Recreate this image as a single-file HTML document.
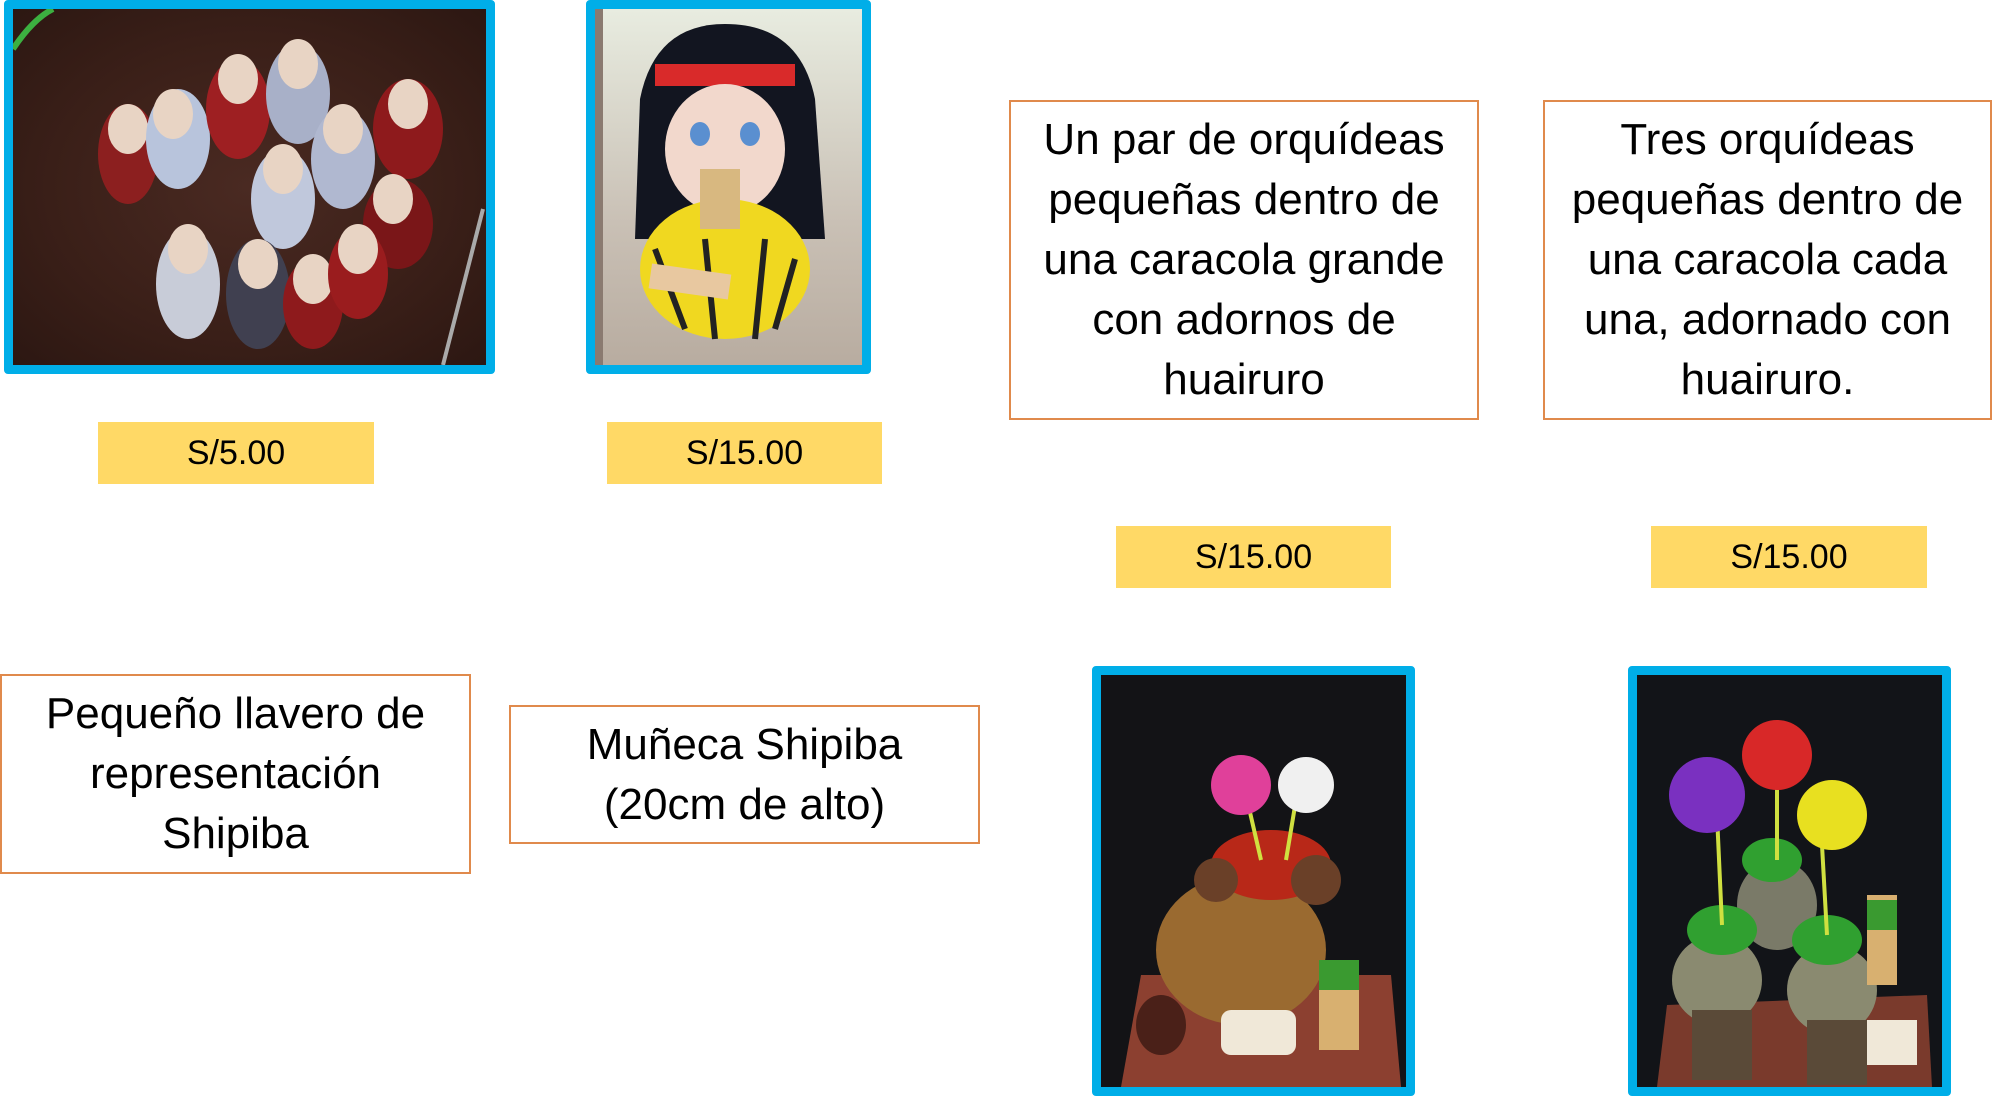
<!DOCTYPE html>
<html><head><meta charset="utf-8"><style>
*{margin:0;padding:0;box-sizing:border-box}
body{width:2000px;height:1081px;background:#fff;position:relative;overflow:hidden;font-family:"Liberation Sans",sans-serif;color:#000}
.a{position:absolute}
.frame{position:absolute;border:9px solid #00aee8;border-radius:4px;overflow:hidden}
.price{position:absolute;background:#ffd966;font-size:34px;display:flex;align-items:center;justify-content:center}
.box{position:absolute;border:2px solid #e08a4c;font-size:44px;line-height:60px;text-align:center;display:flex;align-items:center;justify-content:center;white-space:nowrap}
</style></head><body>

<div class="frame" style="left:4px;top:0;width:491px;height:374px;background:radial-gradient(ellipse at 50% 50%,#4a2a22 0%,#3a1f18 60%,#2c1712 100%)">
<svg width="473" height="356" viewBox="0 0 473 356">
<path d="M0 40 Q20 10 40 0" stroke="#3cb040" stroke-width="6" fill="none"/>
<g>
<ellipse cx="115" cy="145" rx="30" ry="50" fill="#8c1f1f"/><ellipse cx="115" cy="120" rx="20" ry="25" fill="#e8d4c4"/>
<ellipse cx="165" cy="130" rx="32" ry="50" fill="#b8c4dc"/><ellipse cx="160" cy="105" rx="20" ry="25" fill="#e8d4c4"/>
<ellipse cx="225" cy="100" rx="32" ry="50" fill="#9e1f22"/><ellipse cx="225" cy="70" rx="20" ry="25" fill="#e8d4c4"/>
<ellipse cx="285" cy="85" rx="32" ry="50" fill="#a8b0c8"/><ellipse cx="285" cy="55" rx="20" ry="25" fill="#e8d4c4"/>
<ellipse cx="330" cy="150" rx="32" ry="50" fill="#b0b8d0"/><ellipse cx="330" cy="120" rx="20" ry="25" fill="#e8d4c4"/>
<ellipse cx="395" cy="120" rx="35" ry="50" fill="#8e1a1c"/><ellipse cx="395" cy="95" rx="20" ry="25" fill="#e8d4c4"/>
<ellipse cx="270" cy="190" rx="32" ry="50" fill="#c0c8dc"/><ellipse cx="270" cy="160" rx="20" ry="25" fill="#e8d4c4"/>
<ellipse cx="385" cy="215" rx="35" ry="45" fill="#7a1618"/><ellipse cx="380" cy="190" rx="20" ry="25" fill="#e8d4c4"/>
<ellipse cx="175" cy="275" rx="32" ry="55" fill="#c8ccd8"/><ellipse cx="175" cy="240" rx="20" ry="25" fill="#e8d4c4"/>
<ellipse cx="245" cy="285" rx="32" ry="55" fill="#404050"/><ellipse cx="245" cy="255" rx="20" ry="25" fill="#e8d4c4"/>
<ellipse cx="300" cy="295" rx="30" ry="45" fill="#8e1a1c"/><ellipse cx="300" cy="270" rx="20" ry="25" fill="#e8d4c4"/>
<ellipse cx="345" cy="265" rx="30" ry="45" fill="#9a1c1e"/><ellipse cx="345" cy="240" rx="20" ry="25" fill="#e8d4c4"/>
</g>
<path d="M470 200 L430 356" stroke="#aaa" stroke-width="4"/>
</svg></div>

<div class="frame" style="left:586px;top:0;width:285px;height:374px;background:linear-gradient(#e8ece0,#c9c0b5 60%,#b8aca0)">
<svg width="267" height="356" viewBox="0 0 267 356">
<rect x="0" y="0" width="8" height="356" fill="#8a7a70"/>
<path d="M45 90 Q60 15 130 15 Q205 15 220 90 L230 230 L40 230 Z" fill="#121520"/>
<rect x="60" y="55" width="140" height="22" fill="#d92a2a"/>
<ellipse cx="130" cy="140" rx="60" ry="65" fill="#f2d8cc"/>
<ellipse cx="105" cy="125" rx="10" ry="12" fill="#5a8fd0"/><ellipse cx="155" cy="125" rx="10" ry="12" fill="#5a8fd0"/>
<ellipse cx="130" cy="260" rx="85" ry="70" fill="#f0d820"/>
<path d="M60 240 L90 320 M110 230 L120 330 M170 230 L160 330 M200 250 L180 320" stroke="#222" stroke-width="6"/>
<rect x="105" y="160" width="40" height="60" fill="#d8b880"/>
<rect x="55" y="260" width="80" height="25" fill="#e8c8a0" transform="rotate(8 95 272)"/>
</svg></div>

<div class="price" style="left:98px;top:422px;width:276px;height:62px">S/5.00</div>
<div class="price" style="left:607px;top:422px;width:275px;height:62px">S/15.00</div>

<div class="box" style="left:1009px;top:100px;width:470px;height:320px">Un par de orquídeas<br>pequeñas dentro de<br>una caracola grande<br>con adornos de<br>huairuro</div>
<div class="box" style="left:1543px;top:100px;width:449px;height:320px">Tres orquídeas<br>pequeñas dentro de<br>una caracola cada<br>una, adornado con<br>huairuro.</div>

<div class="price" style="left:1116px;top:526px;width:275px;height:62px">S/15.00</div>
<div class="price" style="left:1651px;top:526px;width:276px;height:62px">S/15.00</div>

<div class="box" style="left:0;top:674px;width:471px;height:200px">Pequeño llavero de<br>representación<br>Shipiba</div>
<div class="box" style="left:509px;top:705px;width:471px;height:139px">Muñeca Shipiba<br>(20cm de alto)</div>

<div class="frame" style="left:1092px;top:666px;width:323px;height:430px;background:#131316">
<svg width="305" height="412" viewBox="0 0 305 412">
<path d="M40 300 L290 300 L300 412 L20 412 Z" fill="#8c4030"/>
<ellipse cx="140" cy="275" rx="85" ry="75" fill="#9a6a30"/>
<ellipse cx="170" cy="190" rx="60" ry="35" fill="#b82818"/>
<circle cx="115" cy="205" r="22" fill="#6a4028"/><circle cx="215" cy="205" r="25" fill="#6a4028"/>
<path d="M160 185 L145 120 M185 185 L195 125" stroke="#d0e040" stroke-width="4"/>
<circle cx="140" cy="110" r="30" fill="#e0409a"/><circle cx="205" cy="110" r="28" fill="#f0f0f0"/>
<rect x="218" y="285" width="40" height="90" fill="#d8b070"/><rect x="218" y="285" width="40" height="30" fill="#3a9a30"/>
<rect x="120" y="335" width="75" height="45" rx="10" fill="#f0e8d8"/>
<ellipse cx="60" cy="350" rx="25" ry="30" fill="#4a2018"/>
</svg></div>

<div class="frame" style="left:1628px;top:666px;width:323px;height:430px;background:#121418">
<svg width="305" height="412" viewBox="0 0 305 412">
<path d="M30 330 L290 320 L295 412 L20 412 Z" fill="#7a3a2c"/>
<ellipse cx="80" cy="305" rx="45" ry="45" fill="#8a8a70"/><ellipse cx="195" cy="315" rx="45" ry="45" fill="#8a8a70"/>
<ellipse cx="140" cy="230" rx="40" ry="45" fill="#7a7a68"/>
<rect x="55" y="335" width="60" height="70" fill="#5a4a38"/><rect x="170" y="345" width="60" height="65" fill="#5a4a38"/>
<ellipse cx="85" cy="255" rx="35" ry="25" fill="#30a030"/><ellipse cx="190" cy="265" rx="35" ry="25" fill="#30a030"/><ellipse cx="135" cy="185" rx="30" ry="22" fill="#30a030"/>
<path d="M85 250 L80 140 M190 260 L185 170 M140 185 L140 110" stroke="#d0e040" stroke-width="4"/>
<circle cx="70" cy="120" r="38" fill="#7a30c0"/><circle cx="140" cy="80" r="35" fill="#d82828"/><circle cx="195" cy="140" r="35" fill="#e8e020"/>
<rect x="230" y="220" width="30" height="90" fill="#d8b070"/><rect x="230" y="225" width="30" height="30" fill="#3a9a30"/>
<rect x="230" y="345" width="50" height="45" fill="#f0e8d8"/>
</svg></div>

</body></html>
